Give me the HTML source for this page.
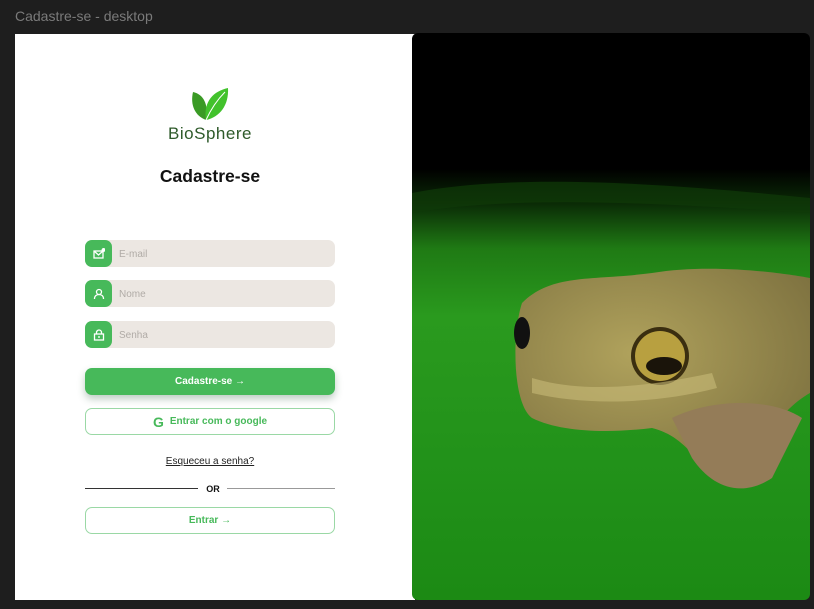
<!DOCTYPE html>
<html><head><meta charset="utf-8"><style>
*{margin:0;padding:0;box-sizing:border-box}
body{width:814px;height:609px;background:#1e1e1e;position:relative;overflow:hidden;font-family:"Liberation Sans",sans-serif}
.title{position:absolute;left:15px;top:8px;color:#7a7a7a;font-size:14px}
.panel{position:absolute;left:15px;top:34px;width:400px;height:566px;background:#fff}
.a{position:absolute}
.field{position:absolute;left:85px;width:250px;height:27px;background:#ece7e2;border-radius:7px}
.field .ic{position:absolute;left:0;top:0;width:27px;height:27px;background:#47b95a;border-radius:7px;display:flex;align-items:center;justify-content:center}
.field span{position:absolute;left:34px;top:9px;font-size:10px;color:#b0aba6}
.btn{position:absolute;left:85px;width:250px;height:27px;border-radius:7px;display:flex;align-items:center;justify-content:center;font-size:10px;font-weight:bold}
</style></head><body>
<div class="title">Cadastre-se - desktop</div>
<div class="panel"></div>
<svg class="a" style="left:190px;top:87px" width="40" height="36" viewBox="0 0 40 36">
<path d="M3 5 C13 7 19 17 16 33 C5 29 0 18 3 5Z" fill="#3a9a25"/>
<path d="M38 1 C24 4 13 14 16 33 C30 30 39 18 38 1Z" fill="#42c22c"/>
<path d="M16 33 C21 22 27 13 35 5" stroke="#fff" stroke-width="1" fill="none"/>
</svg>
<div class="a" style="left:160px;top:124px;width:100px;text-align:center;color:#2e5a2a;font-size:17px;letter-spacing:.5px">BioSphere</div>
<div class="a" style="left:110px;top:166px;width:200px;text-align:center;color:#111;font-size:17.5px;font-weight:bold">Cadastre-se</div>
<div class="field" style="top:240px"><div class="ic"><svg width="12" height="12" viewBox="0 0 12 12" fill="none" stroke="#fff" stroke-width="1.3"><rect x="1" y="3" width="9" height="7"/><path d="M1 3l4.5 4 4.5-4"/><circle cx="10.5" cy="2" r="1.3" fill="#fff"/></svg></div><span>E-mail</span></div>
<div class="field" style="top:280px"><div class="ic"><svg width="12" height="12" viewBox="0 0 12 12" fill="none" stroke="#fff" stroke-width="1.3"><circle cx="6" cy="4" r="2.5"/><path d="M1.5 11c0-3 2-4.5 4.5-4.5s4.5 1.5 4.5 4.5"/></svg></div><span>Nome</span></div>
<div class="field" style="top:321px"><div class="ic"><svg width="12" height="12" viewBox="0 0 12 12" fill="none" stroke="#fff" stroke-width="1.3"><rect x="1.5" y="5" width="9" height="6"/><path d="M3.5 5V3.5a2.5 2.5 0 015 0V5M6 7v2"/></svg></div><span>Senha</span></div>
<div class="btn" style="top:368px;background:#47b95a;color:#fff;box-shadow:0 4px 8px rgba(40,90,60,.3)">Cadastre-se →</div>
<div class="btn" style="top:408px;border:1px solid #9ad8a5;color:#47b95a;background:#fff"><span style="font-size:14px;margin-right:6px">G</span>Entrar com o google</div>
<div class="a" style="left:110px;top:456px;width:200px;text-align:center;font-size:10px;color:#222;text-decoration:underline">Esqueceu a senha?</div>
<div class="a" style="left:85px;top:488px;width:113px;height:1px;background:#333"></div>
<div class="a" style="left:227px;top:488px;width:108px;height:1px;background:#999"></div>
<div class="a" style="left:200px;top:484px;width:26px;text-align:center;font-size:9px;font-weight:bold;color:#111">OR</div>
<div class="btn" style="top:507px;border:1px solid #9ad8a5;color:#47b95a;background:#fff">Entrar →</div>
<svg class="a" style="left:412px;top:33px" width="398" height="567" viewBox="0 0 398 567">
<defs>
<linearGradient id="g" x1="0" y1="0" x2="0" y2="1"><stop offset="0" stop-color="#000"/><stop offset=".24" stop-color="#000"/><stop offset=".3" stop-color="#0a2a06"/><stop offset=".38" stop-color="#1f7a14"/><stop offset=".5" stop-color="#2a9a1e"/><stop offset=".75" stop-color="#22921a"/><stop offset="1" stop-color="#1c8a14"/></linearGradient>
<radialGradient id="f" cx=".4" cy=".4" r=".7"><stop offset="0" stop-color="#b0a25c"/><stop offset="1" stop-color="#7e7240"/></radialGradient>
</defs>
<rect width="398" height="567" rx="6" fill="url(#g)"/>
<path d="M0 160 C100 140 250 150 398 165 L398 180 C250 170 100 162 0 180Z" fill="#0f3a09" opacity=".7"/>
<path d="M110 270 C140 240 180 248 240 240 C300 230 370 240 398 245 L398 360 C380 370 360 390 340 430 C320 455 300 450 285 425 C270 410 260 400 240 395 C200 400 150 400 120 385 C100 370 100 300 110 270Z" fill="url(#f)"/>
<ellipse cx="110" cy="300" rx="8" ry="16" fill="#111"/>
<circle cx="248" cy="323" r="29" fill="#3a2e10"/>
<circle cx="248" cy="323" r="25" fill="#b8a040"/>
<ellipse cx="252" cy="333" rx="18" ry="9" fill="#1a140a"/>
<path d="M120 345 C170 360 230 355 300 340 L305 355 C240 372 170 372 120 360Z" fill="#c8bb78" opacity=".6"/>
<path d="M260 385 C300 365 360 365 390 385 L360 445 C330 465 300 455 280 425Z" fill="#947c58"/>
</svg>
</body></html>
